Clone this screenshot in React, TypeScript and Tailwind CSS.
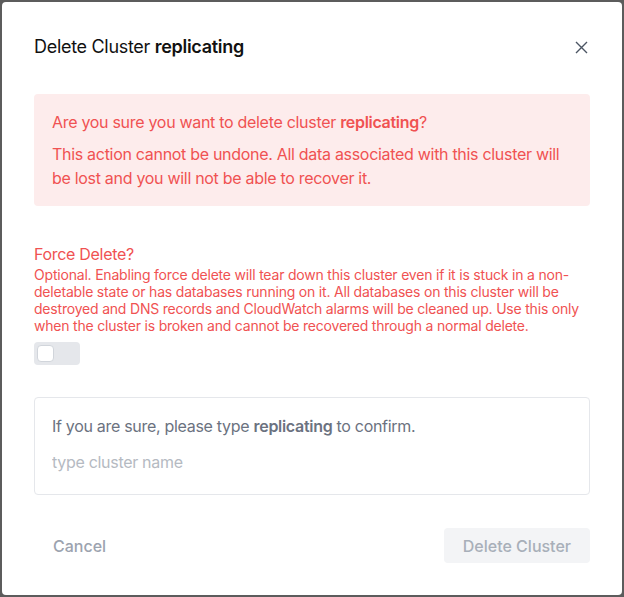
import { useState } from "react";

const clusterName = "replicating";

export default function App() {
  const [force, setForce] = useState(false);
  const [typed, setTyped] = useState("");

  return (
    <div
      className="h-[597px] w-full bg-[#5c5c5c] p-[2px]"
      style={{ fontFamily: "Inter, Roboto, 'Liberation Sans', sans-serif" }}
    >
      <div className="flex h-full flex-col rounded-[4px] bg-white px-8 pt-[31px]">
        <header className="flex h-7 items-center justify-between">
          <h2 className="text-[18px] leading-7 tracking-[-0.3px] text-[#111111]">
            Delete Cluster <span className="font-semibold">{clusterName}</span>
          </h2>
          <button className="mr-[2px] text-[#4b5563]" aria-label="Close">
            <svg width="13" height="13" viewBox="0 0 13 13" fill="none" stroke="currentColor" strokeWidth="1.4">
              <path d="M1 1l11 11M12 1L1 12" />
            </svg>
          </button>
        </header>

        <div className="mt-[33px] rounded-[4px] bg-[#fdecec] px-[18px] py-4 text-[16px] leading-6 tracking-[-0.3px] text-[#f05252]">
          <p>
            Are you sure you want to delete cluster <span className="font-semibold">{clusterName}</span>?
          </p>
          <p className="mt-2">
            This action cannot be undone. All data associated with this cluster will be lost and you will not be
            able to recover it.
          </p>
        </div>

        <section className="mt-9 text-[#f05252]">
          <p className="text-[16px] leading-6 tracking-[-0.3px]">Force Delete?</p>
          <p className="text-[14px] leading-[17px] tracking-[-0.2px]">
            Optional. Enabling force delete will tear down this cluster even if it is stuck in a non-deletable state
            or has databases running on it. All databases on this cluster will be destroyed and DNS records and
            CloudWatch alarms will be cleaned up. Use this only when the cluster is broken and cannot be recovered
            through a normal delete.
          </p>
          <button
            onClick={() => setForce(!force)}
            className={`mt-2 flex h-[23px] w-[46px] items-center rounded-[4px] px-[3px] ${
              force ? "justify-end bg-[#f05252]" : "justify-start bg-[#e5e7eb]"
            }`}
          >
            <span className="h-[17px] w-[17px] rounded-[4px] border border-[#d1d5db] bg-white" />
          </button>
        </section>

        <div className="mt-8 rounded-[4px] border border-[#e5e7eb] px-[17px] pb-[12px] pt-4">
          <p className="text-[16px] leading-6 tracking-[-0.3px] text-[#6b7280]">
            If you are sure, please type <span className="font-semibold">{clusterName}</span> to confirm.
          </p>
          <input
            value={typed}
            onChange={(e) => setTyped(e.target.value)}
            placeholder="type cluster name"
            className="mt-1 h-10 w-full text-[16px] tracking-[-0.3px] text-[#374151] outline-none placeholder:text-[#b5bac2]"
          />
        </div>

        <footer className="mt-[33px] flex items-center justify-between">
          <button className="h-[35px] px-[19px] text-[16px] font-medium text-[#9ca3af]">Cancel</button>
          <button
            disabled={typed !== clusterName}
            className="h-[35px] rounded-[4px] bg-[#f3f4f6] px-[19px] text-[16px] font-medium text-[#a8afb9]"
          >
            Delete Cluster
          </button>
        </footer>
      </div>
    </div>
  );
}
